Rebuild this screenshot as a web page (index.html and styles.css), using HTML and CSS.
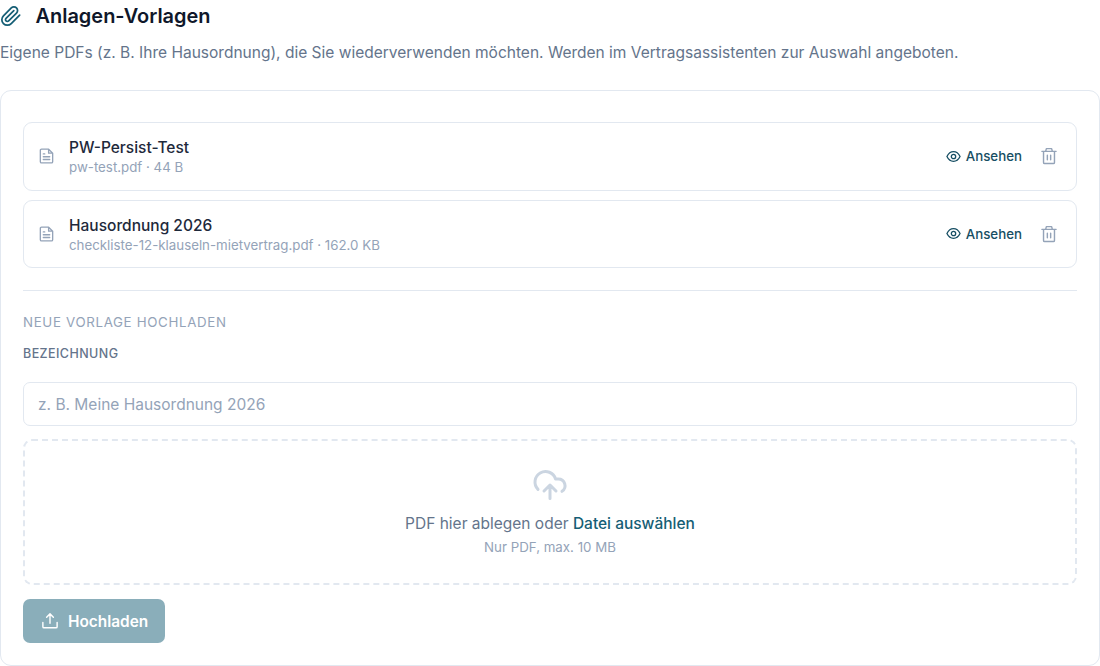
FILE: index.html
```html
<!DOCTYPE html>
<html lang="de">
<head>
<meta charset="utf-8">
<title>Anlagen-Vorlagen</title>
<link rel="stylesheet" href="styles.css">
</head>
<body>

<!-- shared icons -->
<svg class="sprite">
	<symbol id="i-file" viewBox="0 0 24 24">
		<path d="M15 2.300H5A1.700 1.700 0 0 0 3.300 4V20A1.700 1.700 0 0 0 5 21.700H19A1.700 1.700 0 0 0 20.700 20V8ZM15 2.300V8H20.700M7.500 9H9.500M7.500 13H16.500M7.500 17H16.500"/>
	</symbol>
	<symbol id="i-eye" viewBox="0 0 24 24">
		<path d="M1.500 12C4 7 7.500 4.300 12 4.300S20 7 22.500 12C20 17 16.500 19.700 12 19.700S4 17 1.500 12Z"/>
		<circle cx="12" cy="12" r="3.500"/>
	</symbol>
	<symbol id="i-trash" viewBox="0 0 24 24">
		<path d="M2.500 5.800H21.500M4.700 5.800V20.500A1.500 1.500 0 0 0 6.200 22H17.800A1.500 1.500 0 0 0 19.300 20.500V5.800M7.500 5.800L8.500 2.200H15.500L16.500 5.800M9.800 11V17M14.200 11V17"/>
	</symbol>
</svg>

<div class="head">
	<svg class="clip" viewBox="0 0 24 24"><path d="M21.440 11.050l-9.190 9.190a6 6 0 0 1-8.490-8.490l8.570-8.570A4 4 0 1 1 18 8.840l-8.590 8.570a2 2 0 0 1-2.830-2.830l8.490-8.480"/></svg>
	<h1>Anlagen-Vorlagen</h1>
</div>
<p class="intro">Eigene PDFs (z. B. Ihre Hausordnung), die Sie wiederverwenden möchten. Werden im Vertragsassistenten zur Auswahl angeboten.</p>

<div class="card">
	<ul class="list">
		<li class="item">
			<svg class="file"><use href="#i-file"/></svg>
			<div class="info">
				<div class="name">PW-Persist-Test</div>
				<div class="meta">pw-test.pdf · 44 B</div>
			</div>
			<a class="view"><svg><use href="#i-eye"/></svg>Ansehen</a>
			<a class="del" title="Löschen"><svg><use href="#i-trash"/></svg></a>
		</li>
		<li class="item">
			<svg class="file"><use href="#i-file"/></svg>
			<div class="info">
				<div class="name">Hausordnung 2026</div>
				<div class="meta">checkliste-12-klauseln-mietvertrag.pdf · 162.0 KB</div>
			</div>
			<a class="view"><svg><use href="#i-eye"/></svg>Ansehen</a>
			<a class="del" title="Löschen"><svg><use href="#i-trash"/></svg></a>
		</li>
	</ul>

	<form class="upload">
		<h2>Neue Vorlage hochladen</h2>
		<label for="title">Bezeichnung</label>
		<input type="text" id="title" placeholder="z. B. Meine Hausordnung 2026">
		<div class="drop">
			<svg class="cloud" viewBox="0 0 24 24"><path d="M4 14.899A7 7 0 1 1 15.710 8h1.790a4.500 4.500 0 0 1 2.500 8.242M12 12v9M8 16l4-4 4 4"/></svg>
			<p class="hint">PDF hier ablegen oder <span class="pick">Datei auswählen</span></p>
			<p class="limit">Nur PDF, max. 10 MB</p>
		</div>
		<button type="button" class="send" disabled>
			<svg viewBox="0 0 24 24"><path d="M2.500 14V19.500A1.500 1.500 0 0 0 4 21H20A1.500 1.500 0 0 0 21.500 19.500V14M12 15V2.500M7.500 7L12 2.500L16.500 7"/></svg>
			Hochladen
		</button>
	</form>
</div>

</body>
</html>
```
FILE: styles.css
```css
* { box-sizing: border-box; }
body { margin: 0; background: #fff; font-family: Inter, sans-serif; font-size: 15.5px; color: #64748b; }
h1, h2, p, ul { margin: 0; padding: 0; font-weight: normal; }
svg { fill: none; stroke: currentColor; stroke-width: 1.9; stroke-linecap: round; stroke-linejoin: round; flex: none; }
.sprite { display: none; }

.head { display: flex; align-items: center; gap: 13.500px; height: 32px; }
.clip { width: 22px; height: 22px; color: #155e75; }
h1 { font-size: 19.950px; font-weight: 600; line-height: 32px; color: #0f172a; }
.intro { margin-top: 8px; line-height: 25px; font-size: 15.520px; }

.card { margin-top: 25px; height: 576px; padding: 31px 22px 0; border: 1px solid #e2e8f0; border-radius: 11px; }
.list { list-style: none; display: flex; flex-direction: column; gap: 9px; }
.item { display: flex; align-items: center; height: 68.500px; padding: 0 18px 0 14px; border: 1px solid #e2e8f0; border-radius: 9px; }
.file { width: 17px; height: 18px; color: #94a3b8; }
.info { flex: 1; margin-left: 14px; }
.name { padding-top: 1px; font-size: 15.5px; font-weight: 500; line-height: 22px; color: #1e293b; }
.meta { margin-top: -1px; font-size: 13.300px; line-height: 18px; color: #94a3b8; }
.view { display: flex; align-items: center; gap: 5px; font-size: 13.300px; font-weight: 500; color: #164e63; }
.view svg { width: 15px; height: 15px; stroke-width: 2.100; }
.del { margin-left: 18px; display: flex; color: #94a3b8; }
.del svg { width: 18px; height: 18px; }

.upload { margin-top: 22px; padding-top: 22px; border-top: 1px solid #e2e8f0; }
h2 { font-size: 13.300px; line-height: 18px; letter-spacing: 0.670px; text-transform: uppercase; color: #94a3b8; }
label { display: block; margin-top: 14px; font-size: 12.500px; font-weight: 500; line-height: 18px; letter-spacing: 0.430px; text-transform: uppercase; }
input { display: block; width: 100%; height: 44px; margin-top: 19px; padding: 0 14px; border: 1px solid #e2e8f0; border-radius: 7px; font: 15.500px Inter, sans-serif; }
input::placeholder { color: #94a3b8; }
.drop { display: flex; flex-direction: column; align-items: center; height: 146px; margin-top: 13px; padding-top: 26px; border: 2px dashed #e2e8f0; border-radius: 9px; }
.cloud { width: 36px; height: 36px; stroke-width: 2; color: #cbd5e1; }
.hint { margin-top: 9px; line-height: 24px; }
.pick { font-weight: 500; color: #155e75; }
.limit { margin-top: 2px; font-size: 13.300px; line-height: 18px; color: #94a3b8; }
.send { display: flex; align-items: center; gap: 9px; width: 142px; height: 44px; margin-top: 14px; padding: 0 0 0 18px; border: 0; border-radius: 7px; background: #8aaeba; color: #fff; font: 600 15.400px Inter, sans-serif; }
.send svg { width: 18px; height: 18px; }
```
